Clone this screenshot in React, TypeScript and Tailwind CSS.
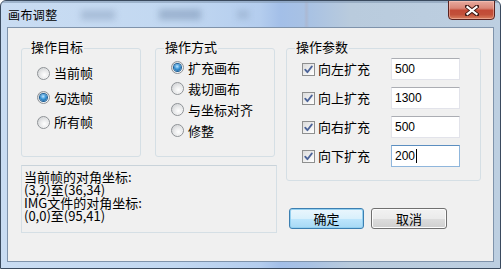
import React from "react";

const CJK = "font-['Noto_Sans_CJK_SC','Noto_Sans',sans-serif]";

function Radio({ checked }: { checked?: boolean }) {
  return (
    <span className="w-[13px] h-[13px] shrink-0 rounded-full border border-[#8e9296] bg-[linear-gradient(135deg,#d2d4d6,#fdfdfd)] flex items-center justify-center">
      {checked ? (
        <span className="w-[7px] h-[7px] rounded-full bg-[radial-gradient(circle_at_45%_35%,#bfe6ff_0%,#3a95d6_45%,#0d4f8a_100%)] shadow-[0_0_0_1px_#1c5f97]" />
      ) : (
        <span className="w-[9px] h-[9px] rounded-full bg-[radial-gradient(circle_at_60%_65%,#ffffff_0%,#e9eaeb_50%,#cfd1d3_100%)]" />
      )}
    </span>
  );
}

function Check() {
  return (
    <span className="w-[13px] h-[13px] shrink-0 border border-[#8e8f8f] bg-[linear-gradient(135deg,#dcdcdc,#ffffff)] flex items-center justify-center">
      <svg width="11" height="11" viewBox="0 0 11 11">
        <path d="M2.2 5.6 L4.4 8.2 L8.9 2.4" fill="none" stroke="#4c6499" strokeWidth="1.8" strokeLinecap="round" strokeLinejoin="round" />
      </svg>
    </span>
  );
}

function Group({ title, className, children }: { title: string; className: string; children: React.ReactNode }) {
  return (
    <div className={`relative border border-[#d5dfe5] rounded-[3px] ${className}`}>
      <span className="absolute -top-[10px] left-[8px] px-[1px] bg-[#f0f0f0] text-[13px] leading-[16px] text-black">{title}</span>
      {children}
    </div>
  );
}

function RadioRow({ label, checked, h }: { label: string; checked?: boolean; h: string }) {
  return (
    <div className={`flex items-center gap-[4px] ${h}`}>
      <Radio checked={checked} />
      <span className="text-[13px] leading-[16px] text-black">{label}</span>
    </div>
  );
}

function ParamRow({ label, value, focused }: { label: string; value: string; focused?: boolean }) {
  return (
    <div className="flex items-center h-[22px]">
      <div className="w-[89px] flex items-center gap-[3px]">
        <Check />
        <span className="text-[13px] leading-[16px] text-black">{label}</span>
      </div>
      <div
        className={`w-[69px] h-[22px] bg-white border flex items-center pl-[3px] font-['Liberation_Sans',sans-serif] text-[12px] text-black ${
          focused ? "border-[#8fb6dc] border-t-[#5b8ec0]" : "border-[#e2e3ea] border-t-[#abadb3]"
        }`}
      >
        <span>{value}</span>
        {focused && <span className="w-[1px] h-[14px] bg-black ml-[1px]" />}
      </div>
    </div>
  );
}

export default function App() {
  return (
    <div className={`w-[501px] h-[269px] ${CJK}`}>
      <div className="relative w-[501px] h-[269px] border border-[#3a4a5e] rounded-t-[6px] overflow-hidden bg-[linear-gradient(90deg,#c9dcf2_0%,#c2d8f1_35%,#b4cdee_52%,#a3bfe8_56%,#a9c2e3_62%,#b9cbdd_70%,#bdcfe1_100%)] flex flex-col">
        {/* blurred background bleed in the title bar */}
        <div className="absolute left-[80px] top-[9px] w-[34px] h-[10px] bg-[#7d94b3]/40 blur-[3px]" />
        <div className="absolute left-[158px] top-[8px] w-[42px] h-[11px] bg-[#6f87a8]/45 blur-[3px]" />
        <div className="absolute left-[236px] top-[9px] w-[12px] h-[9px] bg-[#7d94b3]/35 blur-[3px]" />
        <div className="absolute left-[305px] top-0 w-[1px] h-[27px] bg-[#b79a9c]/60 blur-[1px]" />
        <div className="absolute left-0 top-0 w-full h-[2px] bg-[#8499b3]/60" />

        {/* title bar */}
        <div className="relative h-[26px] flex items-center pl-[7px] pt-[2px] shrink-0">
          <span className="text-[12px] leading-[14px] tracking-[0.4px] text-black">画布调整</span>
        </div>

        {/* close button */}
        <div className="absolute top-[-1px] right-[5px] w-[47px] h-[20px] rounded-b-[4px] border border-[#5a2320] bg-[linear-gradient(180deg,#e7aa9f_0%,#d98677_40%,#c24a36_52%,#c2503a_75%,#d9805f_100%)] shadow-[inset_0_0_0_1px_rgba(255,210,200,0.45)] flex items-center justify-center">
          <svg width="14" height="11" viewBox="0 0 14 11">
            <path d="M2 1.5 L12 9.5 M12 1.5 L2 9.5" stroke="#3a1612" strokeWidth="4" strokeLinecap="square" />
            <path d="M2.5 2 L11.5 9 M11.5 2 L2.5 9" stroke="#ffffff" strokeWidth="2.2" strokeLinecap="square" />
          </svg>
        </div>

        {/* client */}
        <div className="relative mx-[6px] border border-[#7f93ab] bg-[#f0f0f0] h-[235px] shrink-0 flex pl-[13px] pt-[20px]">
          {/* left column */}
          <div className="w-[256px] flex flex-col">
            <div className="flex gap-[14px]">
              <Group title="操作目标" className="w-[120px] h-[109px] pl-[15px] pt-[12px]">
                <RadioRow label="当前帧" h="h-[24px]" />
                <RadioRow label="勾选帧" checked h="h-[25px]" />
                <RadioRow label="所有帧" h="h-[24px]" />
              </Group>
              <Group title="操作方式" className="w-[120px] h-[109px] pl-[15px] pt-[8px]">
                <RadioRow label="扩充画布" checked h="h-[21px]" />
                <RadioRow label="裁切画布" h="h-[21px]" />
                <RadioRow label="与坐标对齐" h="h-[21px]" />
                <RadioRow label="修整" h="h-[21px]" />
              </Group>
            </div>
            <div className="mt-[8px] h-[68px] border border-[#d5dfe5] border-t-[#c9d3da] pl-[2px] pt-[4px] text-[13px] leading-[13px] text-black">
              <div>当前帧的对角坐标:</div>
              <div>(3,2)至(36,34)</div>
              <div>IMG文件的对角坐标:</div>
              <div>(0,0)至(95,41)</div>
            </div>
          </div>

          {/* right column */}
          <div className="ml-[9px] flex flex-col">
            <Group title="操作参数" className="w-[195px] h-[133px] pl-[15px] pt-[9px] flex flex-col gap-[7px]">
              <ParamRow label="向左扩充" value="500" />
              <ParamRow label="向上扩充" value="1300" />
              <ParamRow label="向右扩充" value="500" />
              <ParamRow label="向下扩充" value="200" focused />
            </Group>
            <div className="mt-[27px] ml-[3px] flex gap-[7px]">
              <button className="w-[75px] h-[21px] rounded-[3px] border border-[#3c7fb1] bg-[linear-gradient(180deg,#eaf6fd_0%,#d9f0fc_50%,#bee6fd_51%,#a7d9f5_100%)] shadow-[inset_0_0_0_1px_#94d0f0] text-[13px] leading-[16px] text-black flex items-center justify-center">
                确定
              </button>
              <button className="w-[76px] h-[21px] rounded-[3px] border border-[#707070] bg-[linear-gradient(180deg,#f2f2f2_0%,#ebebeb_50%,#dddddd_51%,#cfcfcf_100%)] shadow-[inset_0_0_0_1px_#fcfcfc] text-[13px] leading-[16px] text-black flex items-center justify-center">
                取消
              </button>
            </div>
          </div>
        </div>
      </div>
    </div>
  );
}
